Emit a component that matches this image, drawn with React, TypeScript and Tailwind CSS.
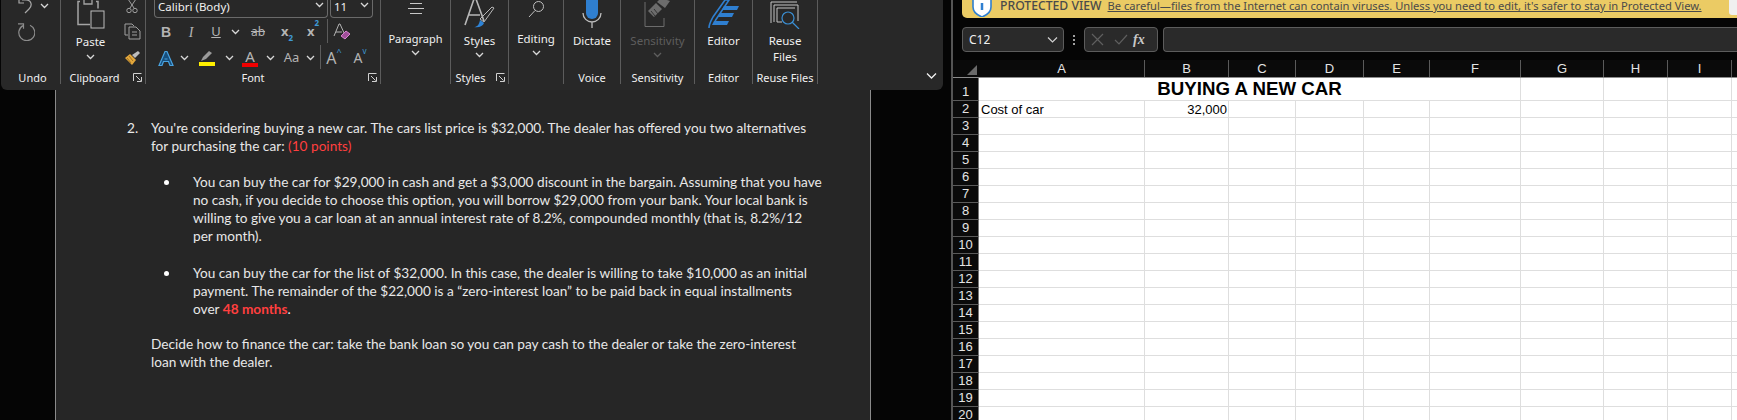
import React from 'react';

const Chev = ({ className = 'text-[#d8d8d8]' }: { className?: string }) => (
  <svg width="9" height="6" viewBox="0 0 9 6" className={className}>
    <path d="M1 1l3.5 3.5L8 1" fill="none" stroke="currentColor" strokeWidth="1.3" />
  </svg>
);

const Launcher = () => (
  <svg width="9" height="9" viewBox="0 0 9 9" className="text-[#d0d0d0]">
    <path d="M.5 8V.5H8.5M3 3l4.5 4.5M4 8.5h4.5V4" fill="none" stroke="currentColor" strokeWidth="1" />
  </svg>
);

// one ribbon group, label sits at the bottom, separator on the right
const Group = ({
  width,
  label,
  labelClass = '',
  launcher,
  children,
}: {
  width: string;
  label: string;
  labelClass?: string;
  launcher?: boolean;
  children: React.ReactNode;
}) => (
  <div className={`${width} h-[84px] shrink-0 flex flex-col border-r border-[#5c5c5c]`}>
    <div className="h-[74px] overflow-hidden">{children}</div>
    <div className={`${labelClass} h-[12px] flex items-center justify-center relative text-[11px] leading-[12px] text-[#f0f0f0] whitespace-nowrap`}>
      {label}
      {launcher && (
        <span className="absolute right-[3px] top-[1px]">
          <Launcher />
        </span>
      )}
    </div>
  </div>
);

const TallButton = ({
  icon,
  lines,
  chevron = true,
  disabled = false,
  textClass = 'pt-[2px] text-[11.5px]',
}: {
  icon: React.ReactNode;
  lines: string[];
  chevron?: boolean;
  disabled?: boolean;
  textClass?: string;
}) => (
  <div className="flex flex-col items-center">
    <div className="h-[31px] w-full flex justify-center items-start overflow-hidden">{icon}</div>
    <div className={`${textClass} flex flex-col items-center leading-[16px] ${disabled ? 'text-[#5e5e5e]' : 'text-[#f0f0f0]'}`}>
      {lines.map((l) => (
        <span key={l}>{l}</span>
      ))}
    </div>
    {chevron && (
      <div className="mt-[3px]">
        <Chev className={disabled ? 'text-[#5e5e5e]' : 'text-[#d8d8d8]'} />
      </div>
    )}
  </div>
);

const Slot = ({ w, children }: { w: string; children: React.ReactNode }) => (
  <div className={`${w} shrink-0 h-full flex items-center justify-center`}>{children}</div>
);

function Ribbon() {
  return (
    <div className="ml-[1px] w-[942px] h-[90px] shrink-0 rounded-b-[6px] bg-[#282828] flex font-['Noto_Sans',sans-serif]">
      <Group width="w-[60px]" label="Undo" labelClass="pl-[4px]">
        <div className="pl-[17px] flex items-start gap-[6px] h-[14px]">
          <svg width="16" height="14" viewBox="0 0 16 14" className="text-[#a8a8a8]">
            <path d="M4 0h4c5 0 7 5 3 9l-4 4M1 0v3h5" fill="none" stroke="currentColor" strokeWidth="1.2" />
          </svg>
          <div className="pt-[3px]">
            <Chev />
          </div>
        </div>
        <div className="pl-[16px] pt-[9px]">
          <svg width="18" height="18" viewBox="0 0 18 18" className="text-[#8c8c8c]">
            <path d="M6 2.600A8 8 0 1 0 13 2.300M1 .8h5.500v5" fill="none" stroke="currentColor" strokeWidth="1.2" />
          </svg>
        </div>
      </Group>

      <Group width="w-[85px]" label="Clipboard" labelClass="pr-[17px]" launcher>
        <div className="flex h-full">
          <div className="w-[58px] flex flex-col items-center pl-[1px]">
            <svg width="28" height="29" viewBox="0 0 28 29" className="text-[#a4a4a4] shrink-0">
              <path d="M3 1.500H1v23h12M19 1.500h2v7" fill="none" stroke="currentColor" strokeWidth="1.5" />
              <path d="M7-2h8v6H7z" fill="none" stroke="currentColor" strokeWidth="1.3" />
              <rect x="14" y="11" width="13" height="17" fill="#282828" stroke="#bdbdbd" strokeWidth="1" />
            </svg>
            <span className="text-[11.5px] leading-[16px] pt-[5px] text-[#f0f0f0]">Paste</span>
            <div className="pt-[4px]">
              <Chev />
            </div>
          </div>
          <div className="flex-1 flex flex-col items-center">
            <svg width="12" height="15" viewBox="0 0 12 15" className="text-[#a0a0a0] mt-[-1px]">
              <path d="M2 0l6 9M10 0L4 9" fill="none" stroke="currentColor" />
              <circle cx="3" cy="11.5" r="2.2" fill="none" stroke="currentColor" />
              <circle cx="9" cy="11.5" r="2.2" fill="none" stroke="currentColor" />
            </svg>
            <svg width="17" height="17" viewBox="0 0 17 17" className="text-[#a0a0a0] mt-[9px]">
              <path d="M4 12H1V1h7l2 2M5 4h7l4 4v8H5z" fill="none" stroke="currentColor" />
              <path d="M8 9h5M8 12h5" stroke="currentColor" />
            </svg>
            <svg width="17" height="16" viewBox="0 0 17 16" className="mt-[10px]">
              <path d="M1 8l7 7 4-5-6-6z" fill="#e4a73b" />
              <path d="M3 8l4 5M5 6l4 5" stroke="#8a6420" strokeWidth=".8" />
              <path d="M8 5l3 3 5-5-2-2z" fill="#bdbdbd" />
            </svg>
          </div>
        </div>
      </Group>

      <Group width="w-[235px]" label="Font" labelClass="pr-[20px]" launcher>
        <div className="flex pl-[8px] gap-[2px] h-[18px] text-[11.5px] text-[#f0f0f0]">
          <div className="w-[174px] h-full border border-t-0 border-[#6a6a6a] rounded-b-[4px] flex items-start justify-between pl-[3px] pr-[3px]">
            <span className="leading-[13px]">Calibri (Body)</span>
            <span className="mt-[2px]"><Chev /></span>
          </div>
          <div className="w-[43px] h-full border border-t-0 border-[#6a6a6a] rounded-b-[4px] flex items-start justify-between pl-[3px] pr-[3px]">
            <span className="leading-[13px]">11</span>
            <span className="mt-[2px]"><Chev /></span>
          </div>
        </div>
        <div className="flex h-[26px] pl-[8px] mt-[1px] text-[#b4b4b4]">
          <Slot w="w-[24px]"><span className="font-bold text-[14px] font-['Liberation_Sans',sans-serif]">B</span></Slot>
          <Slot w="w-[26px]"><span className="italic text-[14px] font-['Liberation_Serif',serif]">I</span></Slot>
          <Slot w="w-[24px]"><span className="underline text-[13px]">U</span></Slot>
          <Slot w="w-[14px]"><Chev /></Slot>
          <Slot w="w-[32px]"><span className="line-through text-[12px]">ab</span></Slot>
          <Slot w="w-[26px]">
            <span className="font-bold text-[13px]">x<sub className="text-[8px] text-[#3f9ad6] align-[-3px]">2</sub></span>
          </Slot>
          <Slot w="w-[26px]">
            <span className="font-bold text-[13px]">x<sup className="text-[8px] text-[#3f9ad6] align-[6px]">2</sup></span>
          </Slot>
          <div className="w-[1px] h-[24px] ml-[1px] bg-[#5c5c5c]" />
          <Slot w="w-[27px]">
            <svg width="18" height="18" viewBox="0 0 18 18">
              <path d="M1 13L6 1h1l5 11M3 9h6" fill="none" stroke="#b4b4b4" />
              <path d="M8 13l5-5 4 3-5 5z" fill="#a14f9a" stroke="#d884cf" />
            </svg>
          </Slot>
        </div>
        <div className="flex h-[26px] pl-[8px] text-[#b4b4b4]">
          <Slot w="w-[24px]">
            <svg width="16" height="17" viewBox="0 0 16 17">
              <path d="M1 15.500L7 1.500h2l6 14h-3l-1.500-4h-5L4 15.500zM6.500 9h3" fill="#174f7d" stroke="#4aa3e0" strokeWidth="1.2" />
            </svg>
          </Slot>
          <Slot w="w-[13px]"><Chev /></Slot>
          <Slot w="w-[32px]">
            <div className="flex flex-col items-center">
              <svg width="14" height="12" viewBox="0 0 14 12">
                <path d="M1 11l2-4 6-6 3 2-6 6z" fill="#9a9a9a" />
              </svg>
              <div className="w-[16px] h-[4px] bg-[#ffef00]" />
            </div>
          </Slot>
          <Slot w="w-[13px]"><Chev /></Slot>
          <Slot w="w-[28px]">
            <div className="flex flex-col items-center">
              <span className="text-[15px] leading-[13px]">A</span>
              <div className="w-[16px] h-[4px] bg-[#f00000]" />
            </div>
          </Slot>
          <Slot w="w-[13px]"><Chev /></Slot>
          <Slot w="w-[29px]"><span className="text-[13px]">Aa</span></Slot>
          <Slot w="w-[9px]"><Chev /></Slot>
          <div className="w-[1px] h-[24px] ml-[5px] bg-[#5c5c5c]" />
          <Slot w="w-[26px]">
            <span className="text-[16px] leading-[16px]">A<sup className="text-[9px] text-[#3f9ad6] align-[5px]">^</sup></span>
          </Slot>
          <Slot w="w-[26px]">
            <span className="text-[14px] leading-[16px]">A<sup className="text-[8px] text-[#3f9ad6] align-[5px]">v</sup></span>
          </Slot>
        </div>
      </Group>

      <Group width="w-[70px]" label="">
        <TallButton
          lines={['Paragraph']}
          textClass="text-[11px]"
          icon={
            <svg width="16" height="18" viewBox="0 0 16 18" className="text-[#c8c8c8]">
              <path d="M2 3.500h12M0 8.500h16M2 13.500h12" stroke="currentColor" />
            </svg>
          }
        />
      </Group>

      <Group width="w-[58px]" label="Styles" labelClass="pr-[18px]" launcher>
        <TallButton
          lines={['Styles']}
          icon={
            <svg width="31" height="30" viewBox="0 0 31 30">
              <path d="M1 25L10 -1h2l8 22M5 15h11" fill="none" stroke="#b8b8b8" strokeWidth="1.6" />
              <path d="M16 19L28 7l2 1-10 14z" fill="none" stroke="#b8b8b8" />
              <path d="M10 27c3 0 5-2 6-7l4 3c-1 3-5 5-10 4z" fill="#2e83d6" />
            </svg>
          }
        />
      </Group>

      <Group width="w-[55px]" label="">
        <TallButton
          lines={['Editing']}
          textClass="text-[11.5px]"
          icon={
            <svg width="17" height="18" viewBox="0 0 17 18" className="text-[#c0c0c0]">
              <circle cx="10.500" cy="6.500" r="5" fill="none" stroke="currentColor" />
              <path d="M7 10.500L1 17" stroke="currentColor" />
            </svg>
          }
        />
      </Group>

      <Group width="w-[57px]" label="Voice">
        <TallButton
          lines={['Dictate']}
          chevron={false}
          icon={
            <svg width="20" height="29" viewBox="0 0 20 29">
              <rect x="4" y="-8" width="12" height="27" rx="6" fill="#2f7fd0" />
              <path d="M1 13a9 9 0 0 0 18 0M10 22v6" fill="none" stroke="#bdbdbd" strokeWidth="1.3" />
            </svg>
          }
        />
      </Group>

      <Group width="w-[74px]" label="Sensitivity">
        <TallButton
          lines={['Sensitivity']}
          disabled
          icon={
            <svg width="28" height="28" viewBox="0 0 28 28">
              <path d="M1 2v24.500h19V18" fill="none" stroke="#6c6c6c" />
              <path d="M4 11l8-8 6 6-8 8zM13 2l4-4 9 3-5 7z" fill="#6c6c6c" />
              <path d="M7 11l4 5M10 9l4 5" stroke="#333" />
            </svg>
          }
        />
      </Group>

      <Group width="w-[58px]" label="Editor">
        <TallButton
          lines={['Editor']}
          chevron={false}
          icon={
            <svg width="31" height="29" viewBox="0 0 31 29">
              <path d="M1 28c0-4 2-7 4-11L17 0h4L7 21" fill="none" stroke="#2f7fd0" strokeWidth="1.6" />
              <path d="M16 6h15l-2 4H14zM12 13h14l-2 4H10zM6 21h15l-2 4H4z" fill="#2f7fd0" />
            </svg>
          }
        />
      </Group>

      <Group width="w-[65px]" label="Reuse Files">
        <TallButton
          lines={['Reuse', 'Files']}
          chevron={false}
          icon={
            <svg width="31" height="29" viewBox="0 0 31 29">
              <path d="M1 2h26M1 2v21M4 5h24v16M4 5v17M7 8h18" fill="none" stroke="#c4c4c4" strokeWidth="1" />
              <circle cx="18" cy="18" r="6" fill="#282828" stroke="#3a8fd4" strokeWidth="1.2" />
              <path d="M22 22l7 7" stroke="#3a8fd4" strokeWidth="1.2" />
              <path d="M7 8v14h5" fill="none" stroke="#c4c4c4" />
            </svg>
          }
        />
      </Group>

      <div className="flex-1 flex items-end justify-end pr-[6px] pb-[11px]">
        <svg width="11" height="6" viewBox="0 0 11 6">
          <path d="M1 .5l4.500 4.500L10 .5" fill="none" stroke="#f0f0f0" strokeWidth="1.3" />
        </svg>
      </div>
    </div>
  );
}

const Bullet = ({ lines }: { lines: React.ReactNode[] }) => (
  <div className="flex">
    <div className="w-[42px] pl-[13px] pt-[7px]">
      <div className="w-[5px] h-[5px] rounded-full bg-white" />
    </div>
    <div>
      {lines.map((l, i) => (
        <div key={i}>{l}</div>
      ))}
    </div>
  </div>
);

function Document() {
  return (
    <div className="ml-[55px] w-[816px] flex-1 bg-[#262626] border-x border-[#8a8a8a] pt-[29px] pl-[95px] font-['Lato',sans-serif] text-[13.65px] leading-[18px] text-[#e8e8e8] whitespace-nowrap">
      <div className="flex -ml-[24px]">
        <div className="w-[24px]">2.</div>
        <div>
          <div>You're considering buying a new car. The cars list price is $32,000. The dealer has offered you two alternatives</div>
          <div>
            for purchasing the car: <span className="text-[#ff3f3f]">(10 points)</span>
          </div>
        </div>
      </div>
      <div className="mt-[18px]">
        <Bullet
          lines={[
            'You can buy the car for $29,000 in cash and get a $3,000 discount in the bargain. Assuming that you have',
            'no cash, if you decide to choose this option, you will borrow $29,000 from your bank. Your local bank is',
            'willing to give you a car loan at an annual interest rate of 8.2%, compounded monthly (that is, 8.2%/12',
            'per month).',
          ]}
        />
      </div>
      <div className="mt-[19px]">
        <Bullet
          lines={[
            'You can buy the car for the list of $32,000. In this case, the dealer is willing to take $10,000 as an initial',
            'payment. The remainder of the $22,000 is a “zero-interest loan” to be paid back in equal installments',
            <>
              over <span className="font-bold text-[#ff3f3f]">48 months</span>.
            </>,
          ]}
        />
      </div>
      <div className="mt-[17px]">
        <div>Decide how to finance the car: take the bank loan so you can pay cash to the dealer or take the zero-interest</div>
        <div>loan with the dealer.</div>
      </div>
    </div>
  );
}

const COLS = ['A', 'B', 'C', 'D', 'E', 'F', 'G', 'H', 'I'];
const COL_CLASS: Record<string, string> = {
  A: 'w-[166px]',
  B: 'w-[84px]',
  C: 'w-[67px]',
  D: 'w-[68px]',
  E: 'w-[66px]',
  F: 'w-[91px]',
  G: 'w-[83px]',
  H: 'w-[64px]',
  I: 'w-[64px]',
};
const ROWS = Array.from({ length: 19 }, (_, i) => i + 2);

const Cell = ({ col, children, right }: { col: string; children?: React.ReactNode; right?: boolean }) => (
  <div
    className={`${COL_CLASS[col]} h-full shrink-0 border-r border-[#dedede] pl-[2px] pr-[1px] pt-[1px] text-[13px] leading-[15px] text-black ${right ? 'text-right' : ''}`}
  >
    {children}
  </div>
);

function Sheet() {
  return (
    <div className="flex-1 overflow-hidden font-['Liberation_Sans',sans-serif]">
      {/* column headers */}
      <div className="flex h-[17px] bg-[#0a0a0a]">
        <div className="w-[26px] shrink-0 flex items-end justify-end pr-[2px] pb-[2px]">
          <div className="w-0 h-0 border-l-[10px] border-l-transparent border-b-[10px] border-b-[#6a6a6a]" />
        </div>
        {COLS.map((c) => (
          <div
            key={c}
            className={`${COL_CLASS[c]} shrink-0 border-r border-[#5a5a5a] flex items-center justify-center text-[13px] leading-[16px] text-[#e4e4e4]`}
          >
            {c}
          </div>
        ))}
      </div>
      <div className="h-[1px] bg-[#8c8c8c]" />
      {/* row 1 is merged across A to F */}
      <div className="flex h-[23px] bg-white border-b border-[#dedede]">
        <div className="w-[26px] shrink-0 h-[23px] bg-[#0a0a0a] border-r border-[#777] border-b border-b-[#5a5a5a] text-center text-[13px] leading-[16px] pt-[6px] text-[#e4e4e4]">
          1
        </div>
        <div className="w-[542px] shrink-0 h-full border-r border-[#dedede] text-center font-bold text-[18.7px] leading-[22px] text-black whitespace-nowrap">
          BUYING A NEW CAR
        </div>
        <Cell col="G" />
        <Cell col="H" />
        <Cell col="I" />
      </div>
      {ROWS.map((r) => (
        <div key={r} className="flex h-[17px] bg-white border-b border-[#dedede]">
          <div className="w-[26px] shrink-0 h-[17px] bg-[#0a0a0a] border-r border-[#777] border-b border-b-[#5a5a5a] text-center text-[13px] leading-[16px] text-[#e4e4e4]">
            {r}
          </div>
          {COLS.map((c) => (
            <Cell key={c} col={c} right={c === 'B'}>
              {r === 2 && c === 'A' && 'Cost of car'}
              {r === 2 && c === 'B' && '32,000'}
            </Cell>
          ))}
        </div>
      ))}
    </div>
  );
}

function Excel() {
  return (
    <div className="flex-1 min-w-0 border-l-2 border-[#555] bg-[#050505] flex flex-col">
      <div className="ml-[9px] h-[18px] shrink-0 rounded-bl-[5px] bg-[#ebcb64] flex items-start pl-[10px] font-['Noto_Sans',sans-serif] leading-[12px] text-[#4a4a4a] whitespace-nowrap relative overflow-hidden">
        <svg width="20" height="17" viewBox="0 0 20 17" className="shrink-0">
          <path d="M1 -3h18v10c0 5-4 8-9 10-5-2-9-5-9-10z" fill="#fff" stroke="#2f7fd0" strokeWidth="1.6" />
          <path d="M10 3v7" stroke="#2f7fd0" strokeWidth="2.5" />
        </svg>
        <span className="ml-[8px] text-[12.2px] font-medium">PROTECTED VIEW</span>
        <span className="ml-[6px] text-[11.15px] underline">
          Be careful—files from the Internet can contain viruses. Unless you need to edit, it's safer to stay in Protected View.
        </span>
        <div className="absolute right-0 top-0 w-[8px] h-[15px] rounded-bl-[3px] bg-[#f0f0f0]" />
      </div>

      <div className="mt-[9px] h-[25px] shrink-0 flex items-stretch ml-[9px] font-['Noto_Sans',sans-serif]">
        <div className="w-[102px] rounded-[4px] border border-[#5c5c5c] bg-[#2a2a2a] flex items-center justify-between pl-[6px] pr-[5px] text-[12px] text-[#f0f0f0]">
          <span>C12</span>
          <svg width="11" height="6" viewBox="0 0 11 6">
            <path d="M1 .5l4.500 4.500L10 .5" fill="none" stroke="#d0d0d0" strokeWidth="1.2" />
          </svg>
        </div>
        <div className="w-[20px] flex flex-col items-center justify-center gap-[2px]">
          <div className="w-[2px] h-[2px] bg-[#a0a0a0]" />
          <div className="w-[2px] h-[2px] bg-[#a0a0a0]" />
          <div className="w-[2px] h-[2px] bg-[#a0a0a0]" />
        </div>
        <div className="w-[74px] rounded-[4px] border border-[#5c5c5c] bg-[#2a2a2a] flex items-center pl-[6px]">
          <svg width="13" height="13" viewBox="0 0 13 13">
            <path d="M1 1l11 11M12 1L1 12" stroke="#5f5f5f" strokeWidth="1.2" />
          </svg>
          <svg width="14" height="11" viewBox="0 0 14 11" className="ml-[10px]">
            <path d="M1 6l4 4 8-9" fill="none" stroke="#5f5f5f" strokeWidth="1.2" />
          </svg>
          <span className="ml-[5px] font-['Liberation_Serif',serif] italic font-bold text-[14px] text-[#c8c8c8]">fx</span>
        </div>
        <div className="ml-[5px] flex-1 border-y border-l border-[#5c5c5c] rounded-l-[4px] bg-[#2a2a2a]" />
      </div>

      <div className="h-[8px] shrink-0" />
      <Sheet />
    </div>
  );
}

export default function App() {
  return (
    <div className="w-[1737px] h-[420px] overflow-hidden flex bg-[#050505]">
      <div className="w-[951px] shrink-0 h-full flex flex-col">
        <Ribbon />
        <Document />
      </div>
      <Excel />
    </div>
  );
}
